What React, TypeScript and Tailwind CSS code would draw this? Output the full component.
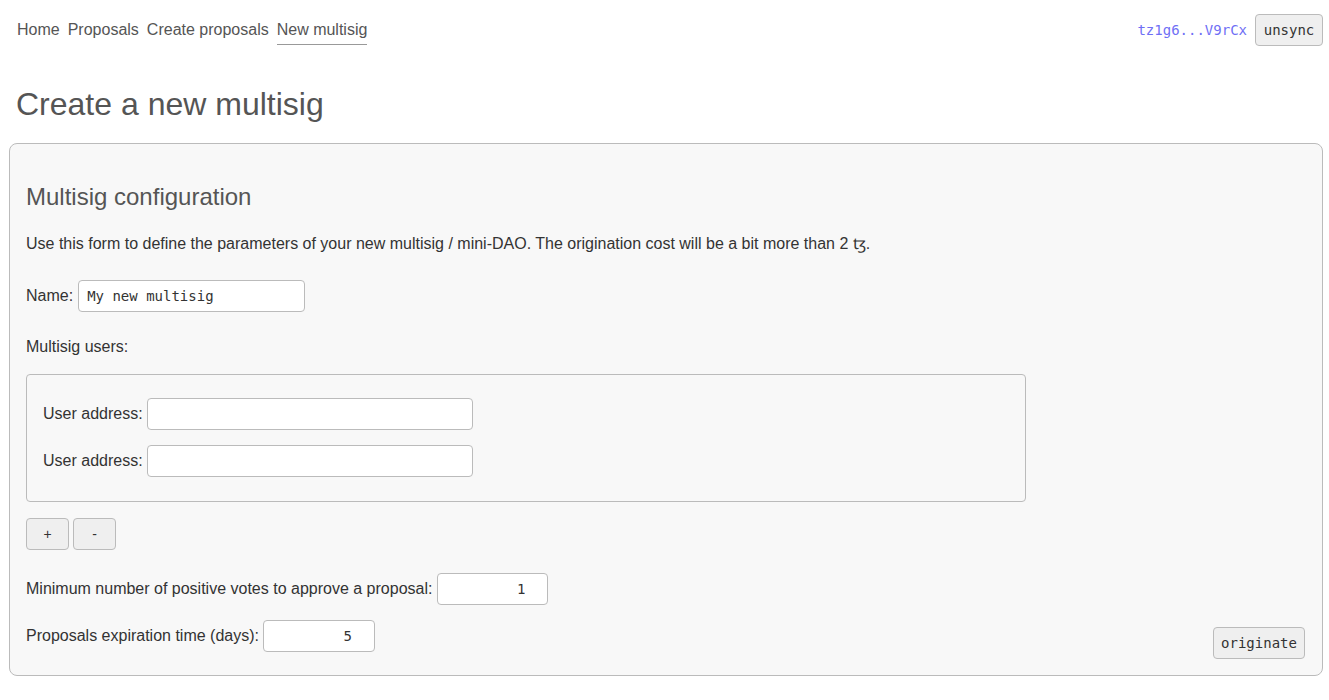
import React from 'react';

const mono = "font-['DejaVu_Sans_Mono',monospace]";

const TextInput = ({ value = '', className = '' }: { value?: string; className?: string }) => (
  <input
    readOnly
    value={value}
    className={`h-8 rounded border border-[#bbb] bg-white px-2 text-[14px] text-[#333] outline-none ${mono} ${className}`}
  />
);

const Button = ({ label, className = '' }: { label: string; className?: string }) => (
  <button
    className={`h-8 rounded border border-[#bbb] bg-[#efefef] text-[14px] text-[#333] ${mono} ${className}`}
  >
    {label}
  </button>
);

export default function App() {
  return (
    <div className="min-h-[700px] bg-white font-['Liberation_Sans',Arial,sans-serif] text-[16px] text-[#333]">
      {/* Top navigation */}
      <div className="flex items-center justify-between pl-[17px] pr-[6px] pt-[14px]">
        <nav className="flex gap-[8px] text-[#555]">
          <span>Home</span>
          <span>Proposals</span>
          <span>Create proposals</span>
          <span className="border-b border-[#999] pb-[2px] -mb-[3px]">New multisig</span>
        </nav>
        <div className="flex items-center gap-[8px]">
          <span className={`text-[14px] text-[#6f6ff5] ${mono}`}>tz1g6...V9rCx</span>
          <Button label="unsync" className="w-[68px]" />
        </div>
      </div>

      <h1 className="mt-[38px] pl-[16px] text-[32px] leading-[40px] text-[#555]">Create a new multisig</h1>

      {/* Card */}
      <div className="ml-[9px] mr-[6px] mt-[19px] h-[533px] rounded-lg border border-[#bbb] bg-[#f8f8f8] pl-[16px] pr-[17px] pt-[39px]">
        <h2 className="text-[24px] leading-[28px] text-[#555]">Multisig configuration</h2>
        <p className="mt-[23px] leading-[20px]">
          Use this form to define the parameters of your new multisig / mini-DAO. The origination cost will be a bit more than 2 ꜩ.
        </p>

        <div className="mt-[26px] flex items-center gap-[5px]">
          <span>Name:</span>
          <TextInput value="My new multisig" className="w-[227px]" />
        </div>

        <div className="mt-[25px] leading-[20px]">Multisig users:</div>

        <div className="mt-[17px] flex w-[1000px] flex-col gap-[15px] rounded border border-[#bbb] px-[16px] pb-[24px] pt-[23px]">
          {[0, 1].map((i) => (
            <div key={i} className="flex items-center gap-[4px]">
              <span>User address:</span>
              <TextInput className="w-[326px]" />
            </div>
          ))}
        </div>

        <div className="mt-[16px] flex gap-[4px]">
          <Button label="+" className="w-[43px] font-['Liberation_Sans',Arial,sans-serif] text-[13px]" />
          <Button label="-" className="w-[43px] font-['Liberation_Sans',Arial,sans-serif] text-[13px]" />
        </div>

        <div className="flex items-end justify-between">
          <div>
            <div className="mt-[23px] flex items-center gap-[5px]">
              <span>Minimum number of positive votes to approve a proposal:</span>
              <TextInput value="1" className="w-[111px] pr-[22px] text-right" />
            </div>
            <div className="mt-[15px] flex items-center gap-[4px]">
              <span>Proposals expiration time (days):</span>
              <TextInput value="5" className="w-[112px] pr-[22px] text-right" />
            </div>
          </div>
          <Button label="originate" className="mb-[-7px] w-[92px]" />
        </div>
      </div>
    </div>
  );
}
